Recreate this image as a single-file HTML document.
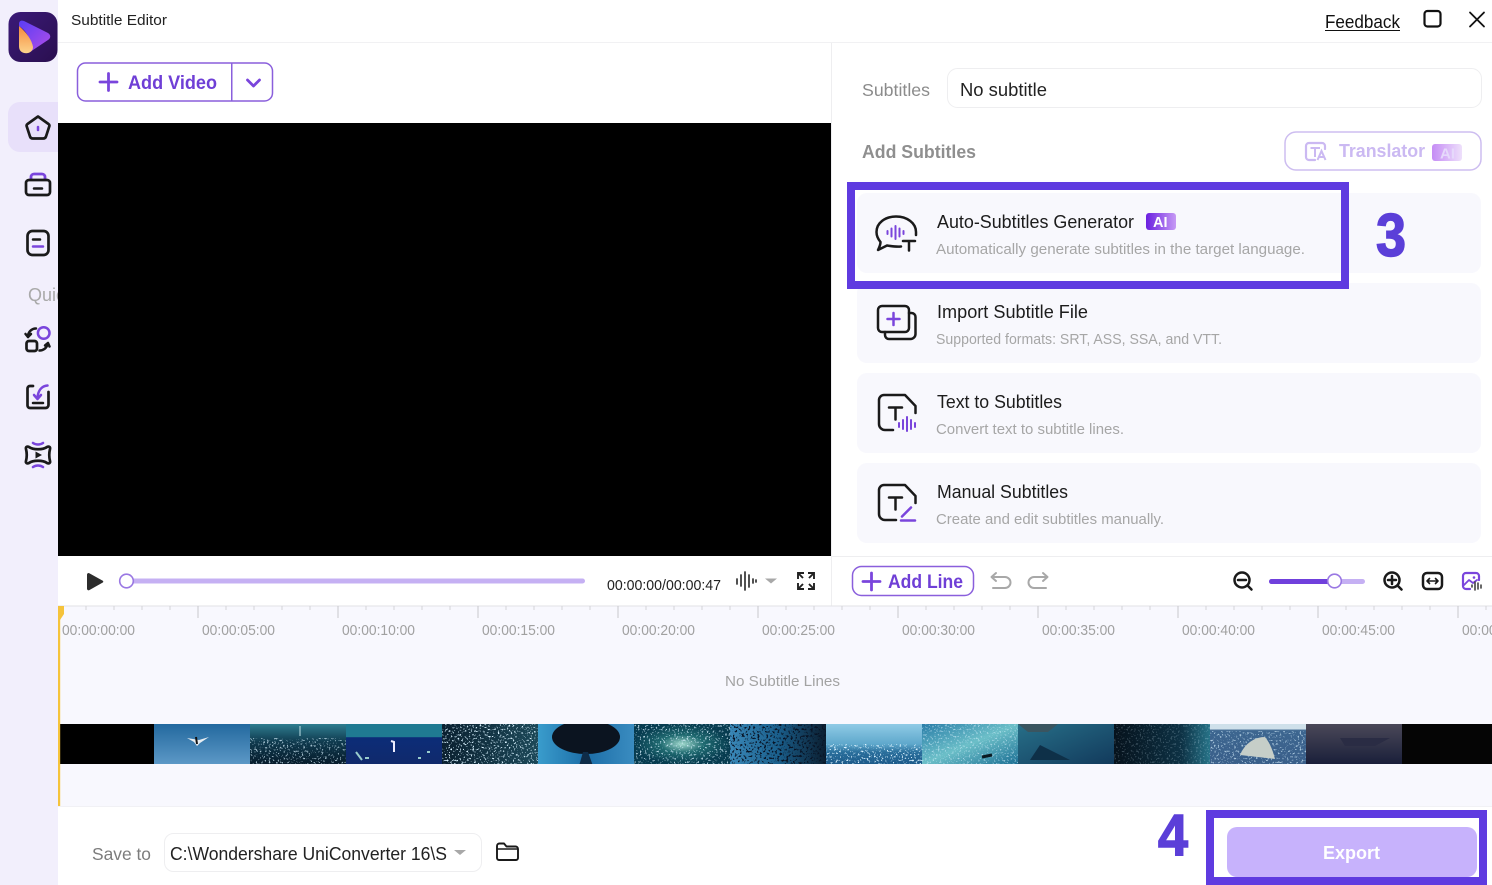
<!DOCTYPE html>
<html><head><meta charset="utf-8"><title>Subtitle Editor</title>
<style>
html,body{margin:0;padding:0;background:#fff;overflow:hidden}
svg{display:block}
text{font-family:"Liberation Sans",sans-serif;white-space:pre}
.b{font-weight:700}
.t{font-size:18px;fill:#1c1c1c}
.d{font-size:15px;fill:#a6a6a6}
.r{font-size:14.5px;fill:#a0a0a0}
.k{fill:none;stroke:#1a1a1a;stroke-linecap:round;stroke-linejoin:round}
.p{fill:none;stroke:#7a45dc;stroke-linecap:round;stroke-linejoin:round}
.g{fill:none;stroke:#a8a8a8;stroke-linecap:round;stroke-linejoin:round}
</style></head><body>
<svg width="1492" height="885" viewBox="0 0 1492 885" stroke-width="2.5" xmlns="http://www.w3.org/2000/svg">
<defs>
<linearGradient id="lg" x1="0" y1="0" x2="1" y2="1"><stop offset="0" stop-color="#3b1a78"/><stop offset="1" stop-color="#2a0f4f"/></linearGradient>
<linearGradient id="pl" x1="0" y1="0" x2="1" y2="1"><stop offset="0" stop-color="#5a3df5"/><stop offset="1" stop-color="#b14ee8"/></linearGradient>
<linearGradient id="or" x1="0" y1="0" x2="0" y2="1"><stop offset="0" stop-color="#f58a3c"/><stop offset="1" stop-color="#fcd38c"/></linearGradient>
<linearGradient id="ai" x1="0" y1="0" x2="1" y2="0"><stop offset="0" stop-color="#6a1fe0"/><stop offset="1" stop-color="#c79af5"/></linearGradient>
<linearGradient id="ai2" x1="0" y1="0" x2="1" y2="0"><stop offset="0" stop-color="#c58cf5"/><stop offset="1" stop-color="#eee0fb"/></linearGradient>
<linearGradient id="f1" x1="0" y1="0" x2="0" y2="1"><stop offset="0" stop-color="#23699f"/><stop offset="1" stop-color="#5c98c6"/></linearGradient>
<linearGradient id="f2" x1="0" y1="0" x2="0" y2="1"><stop offset="0" stop-color="#2f7d90"/><stop offset=".45" stop-color="#0f3a4e"/><stop offset="1" stop-color="#071c2c"/></linearGradient>
<linearGradient id="f3" x1="0" y1="0" x2="0" y2="1"><stop offset="0" stop-color="#1f7a92"/><stop offset=".32" stop-color="#1f7a92"/><stop offset=".34" stop-color="#0c2c78"/><stop offset="1" stop-color="#102a6c"/></linearGradient>
<linearGradient id="f4" x1="0" y1="0" x2="1" y2="0"><stop offset="0" stop-color="#0a2030"/><stop offset="1" stop-color="#1c4858"/></linearGradient>
<linearGradient id="f5" x1="0" y1="0" x2="1" y2="0"><stop offset="0" stop-color="#3a9ccc"/><stop offset=".5" stop-color="#1c6ea8"/><stop offset="1" stop-color="#3a8cc0"/></linearGradient>
<radialGradient id="f6"><stop offset="0" stop-color="#9fd8cc"/><stop offset=".45" stop-color="#1f6a70"/><stop offset="1" stop-color="#073c50"/></radialGradient>
<linearGradient id="f7" x1="0" y1="0" x2="1" y2="0"><stop offset="0" stop-color="#3a88b8"/><stop offset=".5" stop-color="#1a5f8c"/><stop offset="1" stop-color="#0b1e30"/></linearGradient>
<linearGradient id="f8" x1="0" y1="0" x2="0" y2="1"><stop offset="0" stop-color="#8fcbe6"/><stop offset=".5" stop-color="#5fa8cc"/><stop offset=".7" stop-color="#2a6f9c"/><stop offset="1" stop-color="#1c5a8a"/></linearGradient>
<linearGradient id="f9" x1="0" y1="0" x2="1" y2="1"><stop offset="0" stop-color="#2a7da8"/><stop offset=".5" stop-color="#6cbfc8"/><stop offset="1" stop-color="#1c6f94"/></linearGradient>
<linearGradient id="f10" x1="0" y1="0" x2="1" y2="1"><stop offset="0" stop-color="#276f88"/><stop offset="1" stop-color="#123a5c"/></linearGradient>
<linearGradient id="f11" x1="0" y1="0" x2="1" y2="0"><stop offset="0" stop-color="#06121c"/><stop offset=".7" stop-color="#0d3144"/><stop offset="1" stop-color="#277388"/></linearGradient>
<linearGradient id="f12" x1="0" y1="0" x2="0" y2="1"><stop offset="0" stop-color="#cfe0ea"/><stop offset=".12" stop-color="#cfe0ea"/><stop offset=".16" stop-color="#3d6690"/><stop offset="1" stop-color="#3a5f8a"/></linearGradient>
<linearGradient id="f13" x1="0" y1="0" x2="0" y2="1"><stop offset="0" stop-color="#4a4858"/><stop offset="1" stop-color="#1a1f3a"/></linearGradient>
<clipPath id="c1"><rect x="0" y="280" width="58" height="30"/></clipPath>
<clipPath id="c2"><rect x="166" y="840" width="281" height="30"/></clipPath>
<clipPath id="c3"><rect x="58" y="610" width="1434" height="40"/></clipPath>
<clipPath id="c4"><rect x="60" y="724" width="1432" height="40"/></clipPath>
<filter id="sw" x="0" y="0" width="1" height="1" color-interpolation-filters="sRGB"><feTurbulence type="fractalNoise" baseFrequency="0.55" numOctaves="2" seed="3"/><feColorMatrix type="matrix" values="0 0 0 0 .85 0 0 0 0 .95 0 0 0 0 1 0 0 0 9 -5.4"/></filter>
<filter id="sd" x="0" y="0" width="1" height="1" color-interpolation-filters="sRGB"><feTurbulence type="fractalNoise" baseFrequency="0.45" numOctaves="2" seed="8"/><feColorMatrix type="matrix" values="0 0 0 0 .03 0 0 0 0 .08 0 0 0 0 .15 0 0 0 9 -5"/></filter>
</defs>

<!-- base -->
<rect width="1492" height="885" fill="#fff"/>
<rect x="0" y="0" width="58" height="885" fill="#f2effc"/>
<rect x="58" y="42" width="1434" height="1" fill="#f1f1f3"/>
<rect x="831" y="43" width="1" height="563" fill="#eeeef0"/>
<rect x="832" y="556" width="660" height="1" fill="#eeeef0"/>

<!-- logo -->
<rect x="8.500" y="12" width="49" height="50" rx="12" fill="url(#lg)"/>
<path d="M19 24C19 21 21 20 24 21L48 33C51 35 51 38 48 40L30 52C33 42 27 31 19 26Z" fill="url(#pl)"/>
<path d="M19 26C26 32 32 40 33 47C33 52 28 54 24 53C20 52 19 49 19 46Z" fill="url(#or)"/>

<!-- sidebar -->
<path d="M58 102H20a12 12 0 0 0-12 12v26a12 12 0 0 0 12 12H58Z" fill="#e8e0fa"/>
<path d="M38 116.500 L48.500 124 a2 2 0 0 1 .8 2.300 L46 136.500 a3 3 0 0 1-2.800 2 H32.800 a3 3 0 0 1-2.800-2 L26.700 126.300 a2 2 0 0 1 .8-2.300Z" class="k" stroke-width="2.700"/>
<path d="M38 127v3" class="p"/>
<path d="M31 179v-2a3 3 0 0 1 3-3h8a3 3 0 0 1 3 3v2" class="p" stroke-width="2.800"/>
<path d="M31 180H29a3 3 0 0 0-3 3v9a3 3 0 0 0 3 3h18a3 3 0 0 0 3-3v-9a3 3 0 0 0-3-3h-2M31 180H45" class="k" stroke-width="2.700"/>
<path d="M34 188.500h8" class="k"/>
<rect x="27.500" y="231" width="21" height="24" rx="5" class="k" stroke-width="2.700"/>
<path d="M33 239.500h7" class="k"/><path d="M33 246.500h10" class="p"/>
<circle cx="43.700" cy="333" r="5.800" class="p"/>
<rect x="26.500" y="341" width="10.500" height="10" rx="2.500" class="k" stroke-width="2.700"/>
<path d="M28 337a8 8 0 0 1 8-8.500" class="k"/><path d="M25.500 334l2.500 3 3-3" class="k"/>
<path d="M39.500 350.500a8 8 0 0 0 8-6" class="k"/><path d="M45 345.500l3-2.500 1.500 3.500" class="k"/>
<path d="M33 386h-3a2.500 2.500 0 0 0-2.500 2.500V405.500a2.500 2.500 0 0 0 2.500 2.500h15.500a3 3 0 0 0 3-3V392" class="k" stroke-width="2.700"/>
<path d="M47.500 385.500C42 386 38 390 37.500 398" class="p"/><path d="M34 395l3.500 4 3.500-4" class="p"/>
<path d="M33 403h10" class="k"/>
<path d="M29 447C33 450 43 450 47 447C49 446 50.500 447 50 449C49 453 49 457 50 461C50.500 463 49 464 47 463C43 460 33 460 29 463C27 464 25.500 463 26 461C27 457 27 453 26 449C25.500 447 27 446 29 447Z" class="k" stroke-width="2.700"/>
<path d="M35.500 451.500v7l6.500-3.500Z" fill="#1a1a1a"/>
<path d="M33 443c3 2 7 2 10 0" class="p"/><path d="M33 467c3-2 7-2 10 0" class="p"/>
<text x="28" y="301" font-size="18" fill="#a9a9a9" clip-path="url(#c1)">Quick</text>

<!-- title bar -->
<text x="71" y="25" font-size="14.500" fill="#222" textLength="96" lengthAdjust="spacingAndGlyphs">Subtitle Editor</text>
<text x="1325" y="28" font-size="18" fill="#111" textLength="75" lengthAdjust="spacingAndGlyphs">Feedback</text>
<rect x="1325" y="30" width="75" height="1" fill="#111"/>
<rect x="1424.500" y="11" width="16" height="15.500" rx="3" fill="none" stroke="#111" stroke-width="2.200"/>
<path d="M1470 12.500l14 14M1484 12.500l-14 14" fill="none" stroke="#111" stroke-width="1.800" stroke-linecap="round"/>

<!-- add video -->
<rect x="77.500" y="63" width="195" height="38" rx="8" fill="#fff" stroke="#8a5fdc" stroke-width="1.500"/>
<rect x="231" y="63" width="1.500" height="38" fill="#8a5fdc"/>
<path d="M100 82h17M108.500 73.500v17" class="p" stroke-width="2.800"/>
<text x="128" y="89" class="b" font-size="19" fill="#6f3fd6" textLength="89" lengthAdjust="spacingAndGlyphs">Add Video</text>
<path d="M247.500 80l6 6 6-6" class="p" stroke-width="2.800"/>

<!-- video -->
<rect x="58" y="123" width="773" height="433" fill="#000"/>

<!-- player controls -->
<path d="M87 574.500a1.500 1.500 0 0 1 2.300-1.200l13.500 7.500a1 1 0 0 1 0 1.700l-13.500 7.600a1.500 1.500 0 0 1-2.300-1.300Z" fill="#2c2c2c"/>
<rect x="127" y="578.500" width="458" height="5" rx="2.500" fill="#c5b0f3"/>
<circle cx="126.500" cy="581" r="6.800" fill="#fff" stroke="#9a78e3" stroke-width="1.600"/>
<text x="607" y="590" font-size="15" fill="#222" textLength="114" lengthAdjust="spacingAndGlyphs">00:00:00/00:00:47</text>
<path d="M737 579v5M741 575v11M745 572v18M749 575v12M753 579v4M756 580v2" fill="none" stroke="#333" stroke-width="1.700" stroke-linecap="round"/>
<path d="M765 578.500h12l-6 5Z" fill="#a8a8a8"/>
<path d="M804 573h-6v6M808 573h6v6M804 589h-6v-6M808 589h6v-6M798 573l5 5M814 573l-5 5M798 589l5-5M814 589l-5-5" fill="none" stroke="#222" stroke-width="1.900"/>

<!-- right top -->
<text x="862" y="96" font-size="17.500" fill="#8b8b8b" textLength="68" lengthAdjust="spacingAndGlyphs">Subtitles</text>
<rect x="947.500" y="68.500" width="534" height="39" rx="10" fill="#fff" stroke="#eeeef0" stroke-width="1"/>
<text x="960" y="96" font-size="18" fill="#222" textLength="87" lengthAdjust="spacingAndGlyphs">No subtitle</text>
<text x="862" y="158" class="b" font-size="18" fill="#8f8f8f" textLength="114" lengthAdjust="spacingAndGlyphs">Add Subtitles</text>
<rect x="1285" y="132" width="196" height="38" rx="11" fill="#fff" stroke="#cdbdf0" stroke-width="1.500"/>
<path d="M1315 160h-6a3 3 0 0 1-3-3v-11a3 3 0 0 1 3-3h13a3 3 0 0 1 3 3v3" fill="none" stroke="#cbb9f2" stroke-width="2.200" stroke-linecap="round"/>
<path d="M1310.500 148h9.500M1315 148v9M1317.500 160l4-9 4 9M1319 157h5" fill="none" stroke="#cbb9f2" stroke-width="2"/>
<text x="1339" y="157" class="b" font-size="18" fill="#cbb9f2" textLength="86" lengthAdjust="spacingAndGlyphs">Translator</text>
<rect x="1432" y="144" width="30" height="17" rx="3" fill="url(#ai2)"/>
<text x="1440" y="158.500" class="b" font-size="15" fill="#e6d9fb">AI</text>

<!-- cards -->
<rect x="857" y="193" width="624" height="80" rx="10" fill="#f8f8fd"/>
<rect x="857" y="283" width="624" height="80" rx="10" fill="#f8f8fd"/>
<rect x="857" y="373" width="624" height="80" rx="10" fill="#f8f8fd"/>
<rect x="857" y="463" width="624" height="80" rx="10" fill="#f8f8fd"/>

<!-- card 1 -->
<path d="M901 246.500C897 247 890 246 887 245.500L878 250C879.500 247 880.500 244 880.500 242C878 239 876.500 236 876.500 232C876.500 223 885 216.500 896 216.500C907 216.500 916 223 916 232L916 235" class="k"/>
<path d="M887.500 231v3M891.500 228.500v8M895.500 226v13M899.500 228.500v8M903.500 231v3" class="p" stroke-width="2"/>
<path d="M903 241h12M909 241v9.500" class="k"/>
<text x="937" y="228" class="t" textLength="197" lengthAdjust="spacingAndGlyphs">Auto-Subtitles Generator</text>
<rect x="1146" y="213" width="30" height="17" rx="3" fill="url(#ai)"/>
<text x="1153" y="227" class="b" font-size="14.500" fill="#fff">AI</text>
<text x="936" y="254" class="d" textLength="369" lengthAdjust="spacingAndGlyphs">Automatically generate subtitles in the target language.</text>

<!-- card 2 -->
<rect x="878" y="306" width="31" height="26" rx="4" class="k"/>
<path d="M909 313h2.500a4 4 0 0 1 4 4v17a5 5 0 0 1-5 5H889a4 4 0 0 1-4-4v-3" class="k"/>
<path d="M887.500 319h12M893.500 313v12" class="p"/>
<text x="937" y="318" class="t" textLength="151" lengthAdjust="spacingAndGlyphs">Import Subtitle File</text>
<text x="936" y="344" class="d" textLength="286" lengthAdjust="spacingAndGlyphs">Supported formats: SRT, ASS, SSA, and VTT.</text>

<!-- card 3 -->
<path d="M893 430h-8a6 6 0 0 1-6-6v-24a5 5 0 0 1 5-5h21l10.500 11v7" class="k"/>
<path d="M889 407.500h13M895.500 407.500v12" class="k"/>
<path d="M899 423v4M903 420v9M907 417v14M911 420v9M915 423v4" class="p" stroke-width="2"/>
<text x="937" y="408" class="t" textLength="125" lengthAdjust="spacingAndGlyphs">Text to Subtitles</text>
<text x="936" y="434" class="d" textLength="188" lengthAdjust="spacingAndGlyphs">Convert text to subtitle lines.</text>

<!-- card 4 -->
<path d="M896 520h-11a6 6 0 0 1-6-6v-24a5 5 0 0 1 5-5h21l10.500 11v7" class="k"/>
<path d="M889 497.500h13M895.500 497.500v12" class="k"/>
<path d="M902 516.500l9-9" class="p"/><path d="M901 520.500h14" class="p"/>
<text x="937" y="498" class="t" textLength="131" lengthAdjust="spacingAndGlyphs">Manual Subtitles</text>
<text x="936" y="524" class="d" textLength="228" lengthAdjust="spacingAndGlyphs">Create and edit subtitles manually.</text>

<!-- big blue 3 -->
<rect x="851" y="186" width="494" height="99" fill="none" stroke="#5f3be0" stroke-width="8"/>
<text x="1376" y="256" class="b" font-size="60" fill="#5b3fd8" stroke="#5b3fd8" stroke-width="1.500" textLength="30" lengthAdjust="spacingAndGlyphs">3</text>

<!-- timeline toolbar -->
<rect x="852.500" y="566.500" width="121" height="29" rx="9" fill="#fff" stroke="#8a5fdc" stroke-width="1.500"/>
<path d="M863 581.500h17M871.500 573v17" class="p" stroke-width="2.800"/>
<text x="888" y="588" class="b" font-size="19" fill="#6f3fd6" textLength="75" lengthAdjust="spacingAndGlyphs">Add Line</text>
<path d="M992 577h13a4.500 4.500 0 0 1 0 11h-12M996 573l-4.500 4 4.500 4" class="g" stroke-width="2"/>
<path d="M1047 577h-13a4.500 4.500 0 0 0 0 11h12M1043 573l4.500 4-4.500 4" class="g" stroke-width="2"/>
<circle cx="1242" cy="580" r="7.500" class="k"/><path d="M1238 580h8M1248 586l3.500 3.500" class="k"/>
<rect x="1269" y="579" width="96" height="5" rx="2.500" fill="#c5b0f3"/>
<rect x="1269" y="579" width="65" height="5" rx="2.500" fill="#7040dc"/>
<circle cx="1334.500" cy="581" r="6.800" fill="#fff" stroke="#9a78e3" stroke-width="1.600"/>
<circle cx="1392" cy="580" r="7.500" class="k"/><path d="M1388 580h8M1392 576v8M1398 586l3.500 3.500" class="k"/>
<rect x="1423" y="573" width="19" height="16" rx="4" class="k"/>
<path d="M1427 581h11M1429.500 578.500l-2.500 2.500 2.500 2.500M1435.500 578.500l2.500 2.500-2.500 2.500" class="k" stroke-width="1.600"/>
<path d="M1470 589h-4a3 3 0 0 1-3-3v-10a3 3 0 0 1 3-3h10a3 3 0 0 1 3 3v4" class="p" stroke-width="2.200"/>
<path d="M1464 585l5-5 4 3 4-3" class="p" stroke-width="1.800"/><circle cx="1474" cy="577.500" r="1.300" fill="#7a45dc"/>
<path d="M1472 585v2M1475 582v8M1478 583v6M1481 585v3" fill="none" stroke="#444" stroke-width="1.600" stroke-linecap="round"/>

<!-- timeline -->
<rect x="58" y="606" width="1434" height="200" fill="#f8f8fe"/>
<rect x="58" y="605.500" width="1434" height="1" fill="#e2e2e6"/>
<path d="M86 606v4M114 606v4M142 606v4M170 606v4M226 606v4M254 606v4M282 606v4M310 606v4M366 606v4M394 606v4M422 606v4M450 606v4M506 606v4M534 606v4M562 606v4M590 606v4M646 606v4M674 606v4M702 606v4M730 606v4M786 606v4M814 606v4M842 606v4M870 606v4M926 606v4M954 606v4M982 606v4M1010 606v4M1066 606v4M1094 606v4M1122 606v4M1150 606v4M1206 606v4M1234 606v4M1262 606v4M1290 606v4M1346 606v4M1374 606v4M1402 606v4M1430 606v4M1486 606v4" stroke="#d4d4d8" stroke-width="1"/>
<path d="M198 606v12M338 606v12M478 606v12M618 606v12M758 606v12M898 606v12M1038 606v12M1178 606v12M1318 606v12M1458 606v12" stroke="#c8c8cc" stroke-width="1"/>
<g clip-path="url(#c3)">
<text x="62" y="635" class="r" textLength="73" lengthAdjust="spacingAndGlyphs">00:00:00:00</text>
<text x="202" y="635" class="r" textLength="73" lengthAdjust="spacingAndGlyphs">00:00:05:00</text>
<text x="342" y="635" class="r" textLength="73" lengthAdjust="spacingAndGlyphs">00:00:10:00</text>
<text x="482" y="635" class="r" textLength="73" lengthAdjust="spacingAndGlyphs">00:00:15:00</text>
<text x="622" y="635" class="r" textLength="73" lengthAdjust="spacingAndGlyphs">00:00:20:00</text>
<text x="762" y="635" class="r" textLength="73" lengthAdjust="spacingAndGlyphs">00:00:25:00</text>
<text x="902" y="635" class="r" textLength="73" lengthAdjust="spacingAndGlyphs">00:00:30:00</text>
<text x="1042" y="635" class="r" textLength="73" lengthAdjust="spacingAndGlyphs">00:00:35:00</text>
<text x="1182" y="635" class="r" textLength="73" lengthAdjust="spacingAndGlyphs">00:00:40:00</text>
<text x="1322" y="635" class="r" textLength="73" lengthAdjust="spacingAndGlyphs">00:00:45:00</text>
<text x="1462" y="635" class="r" textLength="73" lengthAdjust="spacingAndGlyphs">00:00:50:00</text>
</g>
<text x="725" y="686" font-size="15" fill="#a3a3a3" textLength="115" lengthAdjust="spacingAndGlyphs">No Subtitle Lines</text>

<!-- thumbnails -->
<g clip-path="url(#c4)">
<rect x="60" y="724" width="94" height="40" fill="#000"/>
<rect x="154" y="724" width="96" height="40" fill="url(#f1)"/>
<path d="M187 738l12 2 10-3-9 6-3 3-3-4Z" fill="#e8eef2"/><path d="M196 737l1 7" stroke="#111" stroke-width="2"/>
<rect x="250" y="724" width="96" height="40" fill="url(#f2)"/>
<rect x="250" y="738" width="96" height="26" filter="url(#sw)" opacity=".75"/>
<path d="M300 726v10" stroke="#bfe0e6" stroke-width="1"/>
<rect x="346" y="724" width="96" height="40" fill="url(#f3)"/>
<path d="M391 741l3 1v10" stroke="#eef" stroke-width="2" fill="none"/><path d="M356 752l6 8M365 758h4M427 752h3M418 758h3" stroke="#9cc" stroke-width="2"/>
<rect x="442" y="724" width="96" height="40" fill="url(#f4)"/>
<rect x="442" y="724" width="96" height="40" filter="url(#sw)"/>
<rect x="538" y="724" width="96" height="40" fill="url(#f5)"/>
<ellipse cx="586" cy="737" rx="34" ry="17" fill="#0b1420"/>
<path d="M583 752l-4 14h14l-5-14Z" fill="#0f2c48"/>
<rect x="634" y="724" width="96" height="40" fill="url(#f6)"/>
<rect x="634" y="724" width="96" height="40" filter="url(#sw)" opacity=".8"/>
<rect x="730" y="724" width="96" height="40" fill="url(#f7)"/>
<rect x="730" y="724" width="96" height="40" filter="url(#sd)"/>
<rect x="826" y="724" width="96" height="40" fill="url(#f8)"/>
<rect x="826" y="744" width="96" height="20" filter="url(#sw)"/>
<rect x="922" y="724" width="96" height="40" fill="url(#f9)"/>
<rect x="922" y="724" width="96" height="40" filter="url(#sw)" opacity=".6"/>
<path d="M982 757l10-2" stroke="#0a1a22" stroke-width="3"/>
<rect x="1018" y="724" width="96" height="40" fill="url(#f10)"/>
<path d="M1018 724h40l-10 8h-20Z" fill="#3a5560"/><path d="M1040 745l30 15h-40Z" fill="#0e3048"/>
<rect x="1114" y="724" width="96" height="40" fill="url(#f11)"/>
<rect x="1114" y="724" width="96" height="40" filter="url(#sw)" opacity=".25"/>
<rect x="1210" y="724" width="96" height="40" fill="url(#f12)"/>
<rect x="1210" y="731" width="96" height="33" filter="url(#sw)" opacity=".7"/>
<path d="M1240 755c5-12 15-18 25-18 5 6 8 14 10 22Z" fill="#c6cec8"/>
<rect x="1306" y="724" width="96" height="40" fill="url(#f13)"/>
<path d="M1340 738h50l-15 8h-30Z" fill="#2a2c44"/>
<rect x="1402" y="724" width="90" height="40" fill="#050505"/>
</g>

<!-- playhead -->
<rect x="58" y="606" width="2.200" height="200" fill="#f5c33b"/>
<path d="M58 606h6v8l-4 6h-2Z" fill="#f5c33b"/>

<!-- bottom -->
<rect x="58" y="806" width="1434" height="1" fill="#f1f1f5"/>
<rect x="58" y="807" width="1434" height="78" fill="#fff"/>
<text x="92" y="860" font-size="17.500" fill="#7c7c7c" textLength="59" lengthAdjust="spacingAndGlyphs">Save to</text>
<rect x="164.500" y="833.500" width="317" height="38" rx="9" fill="#fff" stroke="#eeeef0" stroke-width="1"/>
<g clip-path="url(#c2)"><text x="170" y="860" font-size="18" fill="#222" textLength="277" lengthAdjust="spacingAndGlyphs">C:\Wondershare UniConverter 16\S</text></g>
<path d="M454 850h12l-6 5Z" fill="#a8a8a8"/>
<path d="M497 858v-12a2.500 2.500 0 0 1 2.500-2.500h4.500l2.500 3h9a2.500 2.500 0 0 1 2.500 2.500v9a2 2 0 0 1-2 2H499a2 2 0 0 1-2-2Z" class="k" stroke-width="1.900"/>
<path d="M497 849h20" class="k" stroke-width="1.500"/>

<!-- export -->
<rect x="1227" y="827" width="250" height="50" rx="10" fill="#c7b2fc"/>
<text x="1323" y="859" class="b" font-size="18" fill="#fff" textLength="57" lengthAdjust="spacingAndGlyphs">Export</text>
<path d="M1206 810H1487V885H1206Z M1214 818V877H1479V818Z" fill="#5f3be0" fill-rule="evenodd"/>
<text x="1158" y="855" class="b" font-size="58" fill="#5b3fd8" stroke="#5b3fd8" stroke-width="1.500" textLength="30" lengthAdjust="spacingAndGlyphs">4</text>
</svg>
</body></html>
